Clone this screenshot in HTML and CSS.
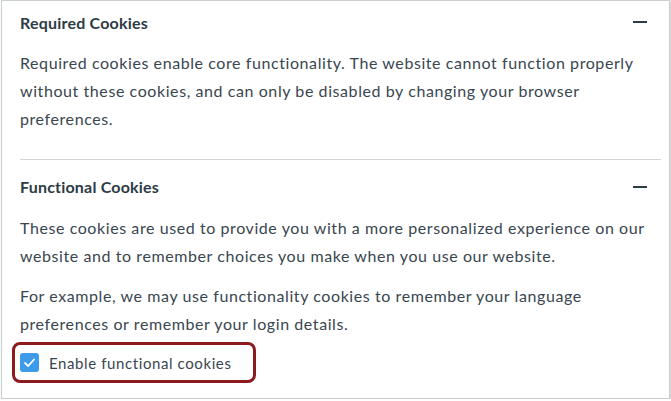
FILE: index.html
```html
<!DOCTYPE html>
<html>
<head>
<meta charset="utf-8">
<link rel="stylesheet" href="styles.css">
</head>
<body>
<div class="panel">
  <section class="section first">
    <div class="head">
      <h3 class="title">Required Cookies</h3>
      <span class="minus"></span>
    </div>
    <p class="text">Required cookies enable core functionality. The website cannot function properly without these cookies, and can only be disabled by changing your browser preferences.</p>
  </section>
  <section class="section second">
    <div class="head">
      <h3 class="title">Functional Cookies</h3>
      <span class="minus"></span>
    </div>
    <p class="text">These cookies are used to provide you with a more personalized experience on our website and to remember choices you make when you use our website.</p>
    <p class="text gap">For example, we may use functionality cookies to remember your language preferences or remember your login details.</p>
    <label class="check">
      <svg class="box" width="19" height="19" viewBox="0 0 19 19">
        <rect x="0" y="0" width="19" height="19" rx="3" fill="#3d9be8"/>
        <polyline points="5,10 8.2,13 14,6.5" fill="none" stroke="#ffffff" stroke-width="1.8" stroke-linecap="round" stroke-linejoin="round"/>
      </svg>
      <span class="label">Enable functional cookies</span>
    </label>
  </section>
</div>
</body>
</html>
```

FILE: styles.css
```css
html, body {
  margin: 0;
  padding: 0;
  background: #ffffff;
}
body {
  font-family: Lato, "Open Sans", sans-serif;
  color: #2d3b45;
}
.panel {
  margin-left: 1px;
  width: 667px;
  height: 397px;
  border: 1px solid #c9ced2;
  box-shadow: 1px 1px 2px rgba(0, 0, 0, 0.22);
  background: #ffffff;
  box-sizing: content-box;
}
.section {
  margin: 0 8px 0 18px;
}
.section.first {
  padding-bottom: 26px;
  border-bottom: 1px solid #d1d6da;
}
.head {
  display: flex;
  align-items: center;
  justify-content: space-between;
  padding-right: 14px;
}
.first .head {
  height: 42px;
  margin-bottom: 6px;
}
.second .head {
  height: 53px;
  margin-bottom: 1px;
}
.title {
  margin: 0;
  font-size: 16px;
  font-weight: 700;
  letter-spacing: 0.2px;
  color: #2d3b45;
}
.minus {
  display: block;
  width: 14px;
  height: 2px;
  background: #2d3b45;
}
.text {
  margin: 0;
  font-size: 16px;
  line-height: 28px;
  letter-spacing: 0.58px;
  color: #394650;
}
.text.gap {
  margin-top: 12px;
}
.check {
  display: inline-flex;
  align-items: center;
  gap: 10px;
  margin: 4px 0 0 -8px;
  height: 35px;
  padding: 0 21px 0 5px;
  border: 3px solid #8c1a1e;
  border-radius: 8px;
}
.box {
  display: block;
  flex: none;
}
.label {
  font-size: 15px;
  letter-spacing: 0.6px;
  color: #394650;
}
```
